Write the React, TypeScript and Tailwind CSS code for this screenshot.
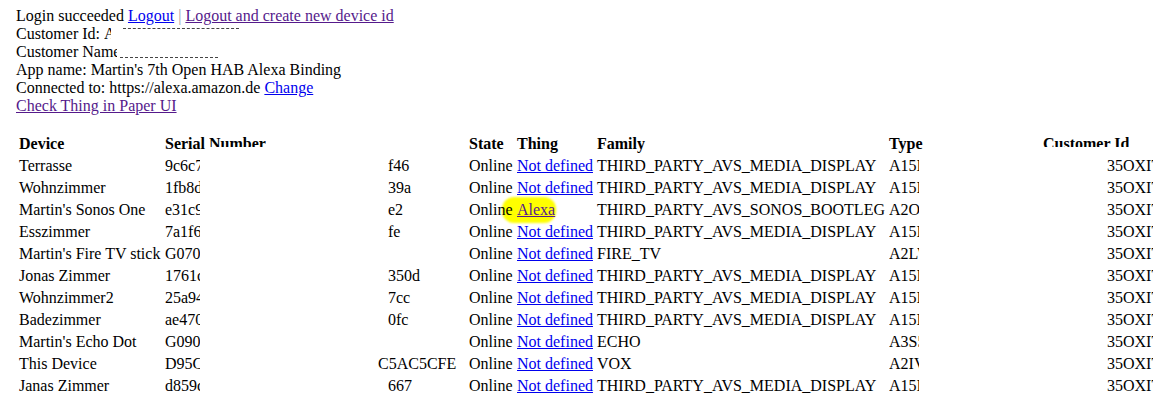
import React from 'react';

type Device = {
  name: string;
  serialStart: string;
  serialEnd: string;
  nearGap?: boolean;
  thing: string;
  family: string;
  type: string;
};

const devices: Device[] = [
  { name: 'Terrasse', serialStart: '9c6c7', serialEnd: 'f46', thing: 'Not defined', family: 'THIRD_PARTY_AVS_MEDIA_DISPLAY', type: 'A15I7XQ' },
  { name: 'Wohnzimmer', serialStart: '1fb8d', serialEnd: '39a', thing: 'Not defined', family: 'THIRD_PARTY_AVS_MEDIA_DISPLAY', type: 'A15I7XQ' },
  { name: "Martin's Sonos One", serialStart: 'e31c9', serialEnd: 'e2', thing: 'Alexa', family: 'THIRD_PARTY_AVS_SONOS_BOOTLEG', type: 'A2OZ' },
  { name: 'Esszimmer', serialStart: '7a1f6', serialEnd: 'fe', thing: 'Not defined', family: 'THIRD_PARTY_AVS_MEDIA_DISPLAY', type: 'A15I7XQ' },
  { name: "Martin's Fire TV stick", serialStart: 'G070', serialEnd: '', thing: 'Not defined', family: 'FIRE_TV', type: 'A2LWAR' },
  { name: 'Jonas Zimmer', serialStart: '1761c', serialEnd: '350d', thing: 'Not defined', family: 'THIRD_PARTY_AVS_MEDIA_DISPLAY', type: 'A15I7XQ' },
  { name: 'Wohnzimmer2', serialStart: '25a94', serialEnd: '7cc', thing: 'Not defined', family: 'THIRD_PARTY_AVS_MEDIA_DISPLAY', type: 'A15I7XQ' },
  { name: 'Badezimmer', serialStart: 'ae470', serialEnd: '0fc', thing: 'Not defined', family: 'THIRD_PARTY_AVS_MEDIA_DISPLAY', type: 'A15I7XQ' },
  { name: "Martin's Echo Dot", serialStart: 'G090', serialEnd: '', thing: 'Not defined', family: 'ECHO', type: 'A3S5BH' },
  { name: 'This Device', serialStart: 'D95C', serialEnd: 'C5AC5CFE', nearGap: true, thing: 'Not defined', family: 'VOX', type: 'A2IVLV' },
  { name: 'Janas Zimmer', serialStart: 'd859c', serialEnd: '667', thing: 'Not defined', family: 'THIRD_PARTY_AVS_MEDIA_DISPLAY', type: 'A15I7XQ' },
];

const App: React.FC = () => {
  return (
    <div className="w-full h-[399px] overflow-hidden text-black font-['Liberation_Serif','Times_New_Roman',serif] text-[16px] leading-[18px]">
      <div className="px-4 pt-[7px]">
        <div>
          Login succeeded{' '}
          <a href="#" className="text-[#0000ee] underline">Logout</a>{' '}
          <span className="text-[#a0a0a0]">|</span>{' '}
          <a href="#" className="text-[#551a8b] underline">Logout and create new device id</a>
        </div>
        <div className="flex items-start whitespace-nowrap">
          <span>Customer Id:&nbsp;</span>
          <span className="inline-block w-[7px] overflow-hidden">A</span>
          <span className="ml-[12px] mt-[3px] inline-block w-[116px] border-t border-dashed border-[#444]" />
        </div>
        <div className="flex items-start whitespace-nowrap">
          <span>Customer Nam</span>
          <span className="inline-block w-[4px] overflow-hidden">e</span>
          <span className="ml-[3px] mt-[14px] inline-block w-[98px] border-t border-dashed border-[#444]" />
        </div>
        <div>App name: Martin's 7th Open HAB Alexa Binding</div>
        <div>
          Connected to: https://alexa.amazon.de{' '}
          <a href="#" className="text-[#0000ee] underline">Change</a>
        </div>
        <div>
          <a href="#" className="text-[#551a8b] underline">Check Thing in Paper UI</a>
        </div>
      </div>

      <table className="mt-[17px] ml-4 table-fixed w-[1228px] border-separate border-spacing-[2px] whitespace-nowrap">
        <thead>
          <tr>
            <th className="w-[144px] p-[1px] text-left font-bold">Device</th>
            <th className="w-[302px] p-[1px] text-left font-bold">
              Serial{' '}
              <span className="inline-block h-[12px] overflow-hidden align-top">Number</span>
            </th>
            <th className="w-[46px] p-[1px] text-left font-bold">State</th>
            <th className="w-[78px] p-[1px] text-left font-bold">Thing</th>
            <th className="w-[290px] p-[1px] text-left font-bold">Family</th>
            <th className="w-[152px] p-[1px] text-left font-bold">Type</th>
            <th className="w-[200px] p-[1px] text-left font-bold">
              <span className="inline-block h-[12px] overflow-hidden align-top">Customer Id</span>
            </th>
          </tr>
        </thead>
        <tbody>
          {devices.map((d, i) => (
            <tr key={i}>
              <td className="p-[1px]">{d.name}</td>
              <td className="p-[1px] overflow-visible">
                <div className="whitespace-nowrap">
                  <span className="inline-block w-[35px] overflow-hidden align-top">{d.serialStart}</span>
                  <span className={d.nearGap ? 'inline-block ml-[178px] align-top' : 'inline-block ml-[188px] align-top'}>{d.serialEnd}</span>
                </div>
              </td>
              <td className="p-[1px]">Online</td>
              <td className="p-[1px]">
                {d.thing === 'Alexa' ? (
                  <span className="relative inline-block">
                    <span className="absolute -z-10 -left-[15px] -top-[4px] w-[54px] h-[26px] rounded-[12px] bg-[#ffff00] blur-[1px]" />
                    <a href="#" className="text-[#551a8b] underline">Alexa</a>
                  </span>
                ) : (
                  <a href="#" className="text-[#0000ee] underline">{d.thing}</a>
                )}
              </td>
              <td className="p-[1px]">{d.family}</td>
              <td className="p-[1px]">
                <span className="inline-block w-[30px] overflow-hidden align-top">{d.type}</span>
              </td>
              <td className="p-[1px] pl-[65px]">35OXITQ7ZK</td>
            </tr>
          ))}
        </tbody>
      </table>
    </div>
  );
};

export default App;
